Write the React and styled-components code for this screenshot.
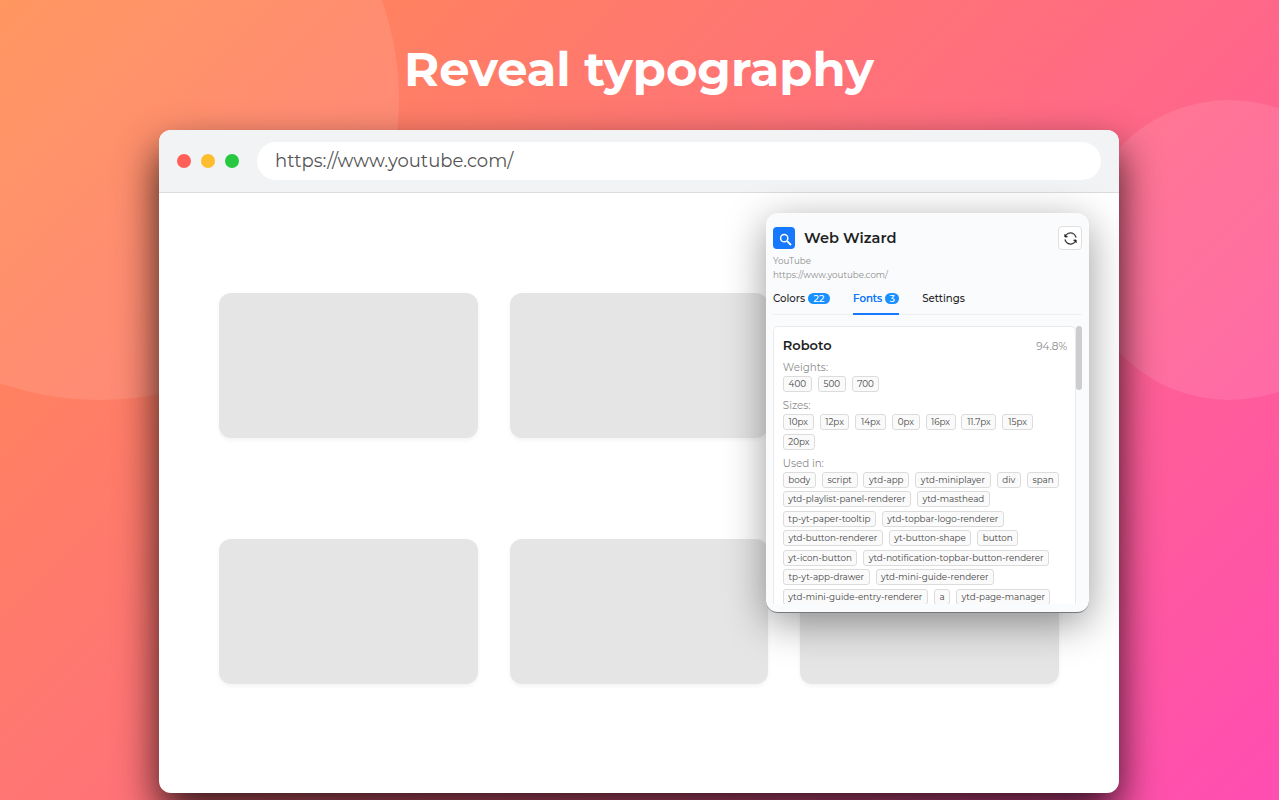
import React from 'react';
import styled, { createGlobalStyle, css } from 'styled-components';
import { GoSync } from 'react-icons/go';

const Global = createGlobalStyle`
  * { box-sizing: border-box; }
  html, body { margin: 0; padding: 0; background: #fff; overflow: hidden; }
  body { font-family: Montserrat, Inter, sans-serif; color: #1f1f1f; }
`;

const Page = styled.div`
  position: relative;
  display: flex;
  flex-direction: column;
  align-items: center;
  width: 1279px;
  height: 800px;
  padding-right: 1px;
  overflow: hidden;
  background: linear-gradient(135deg, #ff8c50 0%, #ff6f7d 50%, #ff4db2 100%);
`;

const Bubble = styled.div`
  position: absolute;
  left: ${(p) => p.$x}px;
  top: ${(p) => p.$y}px;
  width: ${(p) => p.$size}px;
  height: ${(p) => p.$size}px;
  border-radius: 50%;
  background: rgba(255, 255, 255, 0.1);
`;

const Title = styled.h1`
  position: relative;
  margin: 40px 0 31px;
  height: 59px;
  line-height: 59px;
  font-size: 48px;
  font-weight: 700;
  white-space: nowrap;
  color: #fff;
`;

const Browser = styled.main`
  position: relative;
  flex: none;
  display: flex;
  flex-direction: column;
  width: 960px;
  height: 663px;
  border-radius: 12px;
  background: #fff;
  box-shadow: 0 20px 40px rgba(0, 0, 0, 0.8);
`;

const BrowserBar = styled.header`
  display: flex;
  align-items: center;
  gap: 10px;
  height: 63px;
  padding: 0 18px;
  border-bottom: 1px solid #dadce0;
  border-radius: 12px 12px 0 0;
  background: #f1f3f4;
`;

const Light = styled.span`
  width: 14px;
  height: 14px;
  border-radius: 50%;
  background: ${(p) => p.$color};
`;

const Address = styled.div`
  flex: 1;
  height: 38px;
  margin-left: 8px;
  padding-left: 18px;
  border-radius: 19px;
  background: #fff;
  color: #555;
  font-size: 18px;
  line-height: 38px;
  font-weight: 400;
`;

const Tiles = styled.section`
  display: grid;
  grid-template-columns: repeat(3, 1fr);
  gap: 101px 32px;
  padding: 100px 60px;
`;

const Tile = styled.div`
  height: 145px;
  border-radius: 12px;
  background: #e5e5e5;
  box-shadow: 0 2px 4px rgba(0, 0, 0, 0.05);
`;

const Popup = styled.aside`
  position: absolute;
  left: 607px;
  top: 83px;
  display: flex;
  flex-direction: column;
  width: 323px;
  height: 400px;
  padding: 13px 7px 8px;
  overflow: hidden;
  border-radius: 12px;
  background: #fafbfd;
  box-shadow: 0 10px 40px rgba(0, 0, 0, 0.4);
  border-bottom: 1px solid #77787a;
`;

const PopupHead = styled.header`
  display: flex;
  align-items: center;
  height: 24px;
`;

const Logo = styled.span`
  display: grid;
  place-items: center;
  width: 22px;
  height: 22px;
  border-radius: 4px;
  background: #1677ff;
`;

const PopupName = styled.h2`
  flex: 1;
  margin: 0 0 0 9px;
  font-size: 14.6px;
  line-height: 23px;
  font-weight: 600;
`;

const Refresh = styled.button`
  display: grid;
  place-items: center;
  width: 24px;
  height: 24px;
  padding: 0;
  border: 1px solid #e0e0e0;
  border-radius: 4px;
  background: #fff;
  color: #1f1f1f;
  font-size: 13px;
  svg { stroke: currentColor; stroke-width: 0.6; }
`;

const SiteInfo = styled.div`
  margin-top: 5px;
  color: #8c8c8c;
  font-size: 8.7px;
  line-height: 13.5px;
`;

const TabBar = styled.nav`
  display: flex;
  flex: none;
  gap: 23px;
  height: 27px;
  margin-top: 6px;
  border-bottom: 1px solid #f0f0f2;
`;

const Tab = styled.div`
  display: flex;
  gap: 3px;
  height: 27px;
  color: #262626;
  font-size: 10.2px;
  line-height: 21px;
  font-weight: 500;
  ${(p) => p.$active && css`
    color: #1677ff;
    border-bottom: 2px solid #1677ff;
    text-shadow: 0 0 0.3px currentcolor;
  `}
`;

const Count = styled.span`
  width: ${(p) => p.$width}px;
  height: 11px;
  margin-top: 5px;
  border-radius: 6px;
  background: #1890ff;
  color: #fff;
  font-size: 9.6px;
  line-height: 11px;
  text-align: center;
  text-shadow: none;
`;

const Scroller = styled.div`
  display: flex;
  flex: 1;
  min-height: 0;
  margin-top: 11px;
  overflow: hidden;
`;

const FontCard = styled.article`
  width: 303px;
  flex: none;
  height: 420px;
  padding: 10px 8px 0 8.8px;
  border: 1px solid #e9eaec;
  border-radius: 5px;
  background: #fff;
`;

const Thumb = styled.div`
  width: 6px;
  height: 64px;
  border-radius: 3px;
  background: #cdcdcd;
`;

const CardHead = styled.div`
  display: flex;
  justify-content: space-between;
  height: 18px;
  line-height: 18px;
`;

const FontName = styled.strong`
  font-size: 13px;
  line-height: 17px;
  font-weight: 600;
`;

const Share = styled.span`
  color: #8c8c8c;
  font-size: 10.4px;
  line-height: 19px;
`;

const Label = styled.div`
  height: 11px;
  margin-top: ${(p) => p.$top || 7}px;
  color: #8c8c8c;
  font-size: 10.3px;
  line-height: 11px;
`;

const TagRow = styled.div`
  display: flex;
  gap: 5.9px;
  height: 16px;
  margin: ${(p) => p.$top}px 0 0;
`;

const Tag = styled.span`
  flex: none;
  width: ${(p) => p.$width}px;
  height: 16px;
  border: 1px solid #dcdcdc;
  border-radius: 3px;
  background: #fafafa;
  color: #444;
  font-size: 8.75px;
  line-height: 14px;
  text-align: center;
  white-space: nowrap;
`;

const WEIGHTS = [[['400', 29], ['500', 28.3], ['700', 27.3]]];
const SIZES = [
  [['10px', 31], ['12px', 29.7], ['14px', 31], ['0px', 27.5], ['16px', 30], ['11.7px', 35], ['15px', 30.5]],
  [['20px', 32.3]],
];
const USED_IN = [
  [['body', 33], ['script', 35.9], ['ytd-app', 45.7], ['ytd-miniplayer', 75.7], ['div', 24.3], ['span', 32.5]],
  [['ytd-playlist-panel-renderer', 128], ['ytd-masthead', 73.3]],
  [['tp-yt-paper-tooltip', 93.2], ['ytd-topbar-logo-renderer', 121.7]],
  [['ytd-button-renderer', 100], ['yt-button-shape', 82.7], ['button', 41]],
  [['yt-icon-button', 74.6], ['ytd-notification-topbar-button-renderer', 185.7]],
  [['tp-yt-app-drawer', 86.9], ['ytd-mini-guide-renderer', 118.3]],
  [['ytd-mini-guide-entry-renderer', 145], ['a', 16.6], ['ytd-page-manager', 94.3]],
];

function TagGroup({ rows }) {
  return rows.map((row, i) => (
    <TagRow key={i} $top={i === 0 ? 3 : 3.5}>
      {row.map(([text, width]) => <Tag key={text} $width={width}>{text}</Tag>)}
    </TagRow>
  ));
}

function MagnifierIcon() {
  return (
    <svg width="22" height="22" viewBox="0 0 22 22" fill="none" stroke="#fff">
      <circle cx="11.2" cy="11.2" r="3.6" strokeWidth="1.5" />
      <path d="M14.1 14.1L18 18" strokeWidth="1.9" />
    </svg>
  );
}

export default function App() {
  return (
    <>
      <Global />
      <Page>
        <Bubble $x={-201} $y={-200} $size={600} />
        <Bubble $x={1079} $y={100} $size={300} />
        <Title>Reveal typography</Title>
        <Browser>
          <BrowserBar>
            <Light $color="#ff5f57" />
            <Light $color="#ffbd2e" />
            <Light $color="#28c940" />
            <Address>https://www.youtube.com/</Address>
          </BrowserBar>
          <Tiles>
            {[1, 2, 3, 4, 5, 6].map((n) => <Tile key={n} />)}
          </Tiles>
          <Popup>
            <PopupHead>
              <Logo><MagnifierIcon /></Logo>
              <PopupName>Web Wizard</PopupName>
              <Refresh aria-label="Refresh"><GoSync /></Refresh>
            </PopupHead>
            <SiteInfo>
              <div>YouTube</div>
              <div>https://www.youtube.com/</div>
            </SiteInfo>
            <TabBar>
              <Tab>Colors<Count $width={22}>22</Count></Tab>
              <Tab $active>Fonts<Count $width={14}>3</Count></Tab>
              <Tab>Settings</Tab>
            </TabBar>
            <Scroller>
              <FontCard>
                <CardHead>
                  <FontName>Roboto</FontName>
                  <Share>94.8%</Share>
                </CardHead>
                <Label>Weights:</Label>
                <TagGroup rows={WEIGHTS} />
                <Label $top={8}>Sizes:</Label>
                <TagGroup rows={SIZES} />
                <Label $top={8}>Used in:</Label>
                <TagGroup rows={USED_IN} />
              </FontCard>
              <Thumb />
            </Scroller>
          </Popup>
        </Browser>
      </Page>
    </>
  );
}
